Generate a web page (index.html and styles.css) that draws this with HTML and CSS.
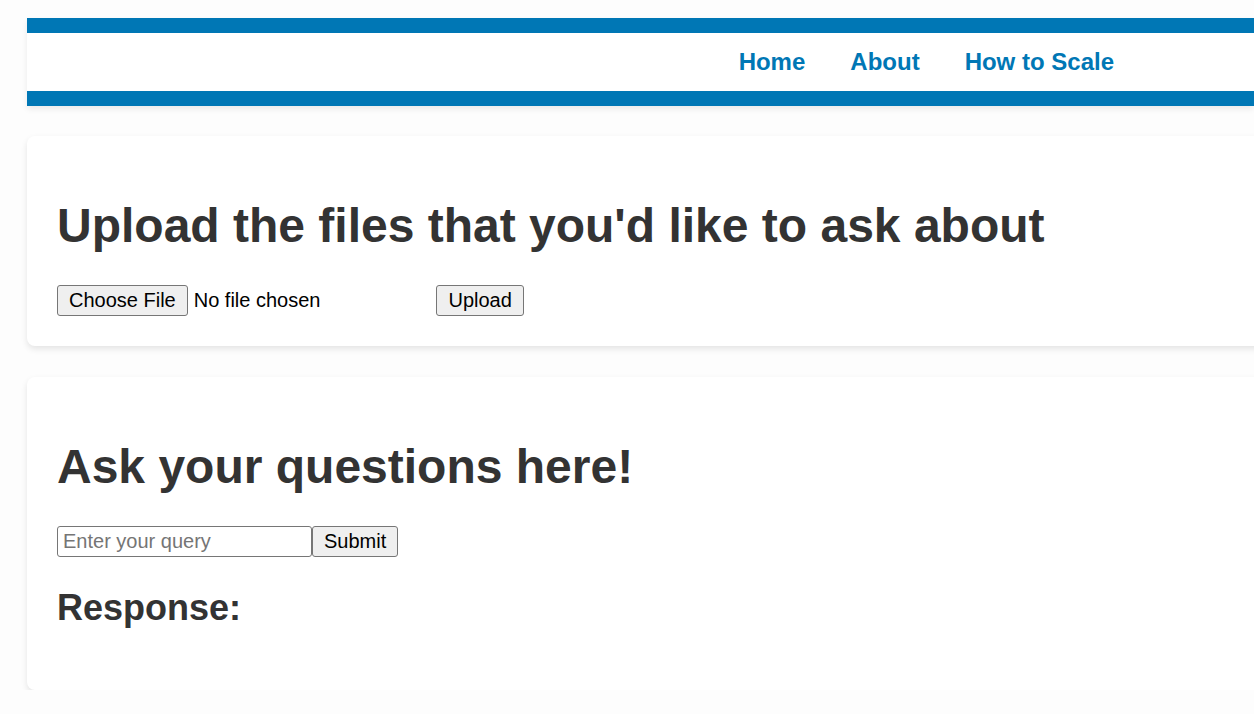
FILE: index.html
```html
<!DOCTYPE html>
<html lang="en">
<head>
    <meta charset="UTF-8">
    <meta name="viewport" content="width=device-width, initial-scale=1.0">
    <title>Ask Your Files</title>
    <link rel="stylesheet" href="styles.css">
</head>
<body>
    <div class="wrapper">
        <header>
            <nav>
                <ul>
                    <li><a href="#">Home</a></li>
                    <li><a href="#">About</a></li>
                    <li><a href="#">How to Scale</a></li>
                </ul>
            </nav>
        </header>

        <div class="card">
            <h1>Upload the files that you'd like to ask about</h1>
            <form class="upload-form">
                <input type="file" name="file" class="file-input">
                <button type="submit" class="btn">Upload</button>
            </form>
        </div>

        <div class="card">
            <h1>Ask your questions here!</h1>
            <form class="query-form">
                <input type="text" name="query" class="query-input" placeholder="Enter your query"><button type="submit" class="btn">Submit</button>
            </form>
            <h2>Response:</h2>
            <div id="response"></div>
        </div>
    </div>
</body>
</html>
```

FILE: styles.css
```css
html, body {
    overflow-x: hidden;
}
body {
    font-family: "Liberation Sans", Arial, sans-serif;
    margin: 0;
    padding: 0;
    background: #fdfdfd;
    color: #333333;
}
.wrapper {
    padding: 18px 0 0 27px;
}
header {
    background: #ffffff;
    border-top: 15px solid #0077b5;
    border-bottom: 15px solid #0077b5;
    height: 58px;
    display: flex;
    align-items: center;
    width: 100%;
    box-shadow: 0 3px 6px rgba(0,0,0,0.08);
}
header nav {
    margin-left: auto;
    margin-right: 140px;
}
header ul {
    list-style: none;
    display: flex;
    gap: 45px;
    margin: 0;
    padding: 0;
}
header a {
    color: #0077b5;
    text-decoration: none;
    font-weight: bold;
    font-size: 24px;
}
.card {
    background: #ffffff;
    margin-top: 30px;
    padding: 30px;
    width: 100%;
    border-radius: 8px;
    box-shadow: 0 3px 6px rgba(0,0,0,0.1);
}
.card + .card {
    margin-top: 31px;
}
.card h1 {
    font-size: 48px;
    margin: 32px 0;
}
.card h2 {
    font-size: 36px;
    margin: 30px 0 31px;
}
.upload-form, .query-form {
    margin: 0;
    line-height: 1;
}
.upload-form {
    margin-top: 1px;
}
.file-input {
    font-family: "Liberation Sans", Arial, sans-serif;
    font-size: 20px;
    width: 375px;
    height: 31px;
    color: #000000;
    vertical-align: top;
}
.file-input::file-selector-button {
    font-family: inherit;
    font-size: 20px;
    height: 31px;
    padding: 1px 11px;
    margin-right: 6px;
    background: #efefef;
    border: 1px solid #767676;
    border-radius: 3px;
    color: #000000;
}
.btn {
    font-family: "Liberation Sans", Arial, sans-serif;
    font-size: 20px;
    padding: 1px 11px;
    height: 31px;
    background: #efefef;
    border: 1px solid #767676;
    border-radius: 3px;
    color: #000000;
    vertical-align: top;
}
.query-input {
    font-family: "Liberation Sans", Arial, sans-serif;
    font-size: 20px;
    box-sizing: border-box;
    width: 255px;
    height: 31px;
    padding: 1px 5px;
    border: 1px solid #767676;
    border-radius: 3px;
    vertical-align: top;
}
.query-input::placeholder {
    color: #757575;
}
```
